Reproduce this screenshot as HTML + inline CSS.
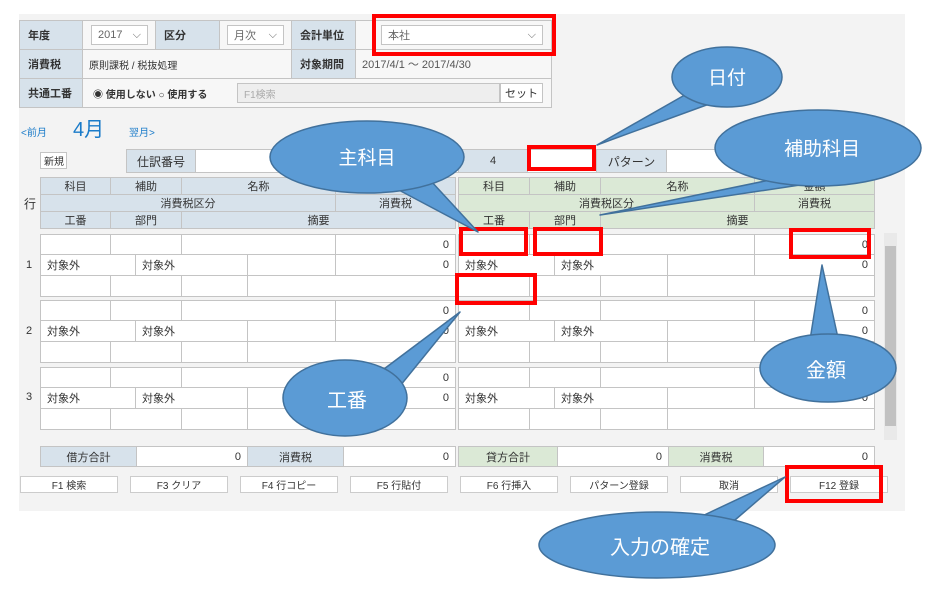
<!DOCTYPE html>
<html><head><meta charset="utf-8"><style>
body{margin:0;width:935px;height:591px;background:#fff;position:relative;overflow:hidden;font-family:"Liberation Sans","Noto Sans CJK JP",sans-serif;font-size:11px;color:#333}
.a{position:absolute;box-sizing:border-box}
.c{position:absolute;box-sizing:border-box;border:1px solid #c4c4c4;background:#fff;display:flex;align-items:center;padding:0 6px;white-space:nowrap;overflow:hidden}
.h{background:#d7e2eb;justify-content:center;padding:0}
.g{background:#dbe9d6;justify-content:center;padding:0}
.r{justify-content:flex-end}
.l{background:#d7e2eb;font-weight:bold;padding-left:8px}
.b{position:absolute;box-sizing:border-box;border:1px solid #ccc;background:#fff;font-size:10px;display:flex;align-items:center;justify-content:center;height:17px;top:476px;width:98px}
.red{position:absolute;box-sizing:border-box;border:4px solid #f00}
</style></head><body>
<div class="a" style="left:19px;top:14px;width:886px;height:497px;background:#f3f3f3"></div>
<!-- top table -->
<div class="c l" style="left:19px;top:20px;width:64px;height:30px">年度</div>
<div class="c" style="left:82px;top:20px;width:74px;height:30px;background:#f7f7f7"></div>
<div class="c" style="left:91px;top:25px;width:57px;height:20px;color:#666">2017 <span style="margin-left:auto">⌵</span></div>
<div class="c l" style="left:155px;top:20px;width:65px;height:30px">区分</div>
<div class="c" style="left:219px;top:20px;width:73px;height:30px;background:#f7f7f7"></div>
<div class="c" style="left:227px;top:25px;width:57px;height:20px;color:#666">月次 <span style="margin-left:auto">⌵</span></div>
<div class="c l" style="left:291px;top:20px;width:65px;height:30px">会計単位</div>
<div class="c" style="left:355px;top:20px;width:197px;height:30px;background:#f7f7f7"></div>
<div class="c" style="left:381px;top:25px;width:162px;height:20px;color:#666">本社 <span style="margin-left:auto">⌵</span></div>
<div class="c l" style="left:19px;top:49px;width:64px;height:30px">消費税</div>
<div class="c" style="left:82px;top:49px;width:210px;height:30px;background:#f7f7f7;font-size:10px">原則課税 / 税抜処理</div>
<div class="c l" style="left:291px;top:49px;width:65px;height:30px">対象期間</div>
<div class="c" style="left:355px;top:49px;width:197px;height:30px;background:#f7f7f7;color:#555">2017/4/1 ～ 2017/4/30</div>
<div class="c l" style="left:19px;top:78px;width:64px;height:30px">共通工番</div>
<div class="c" style="left:82px;top:78px;width:470px;height:30px;background:#f7f7f7;font-weight:bold;font-size:10px;padding-left:10px">◉ 使用しない ○ 使用する</div>
<div class="c" style="left:237px;top:83px;width:263px;height:20px;background:#eee;color:#aaa;font-size:10px">F1検索</div>
<div class="c" style="left:500px;top:83px;width:43px;height:20px;justify-content:center;padding:0">セット</div>
<!-- month nav -->
<div class="a" style="left:21px;top:124px;color:#1a7bc9;font-size:10px">&lt;前月</div>
<div class="a" style="left:73px;top:113px;color:#1a7bc9;font-size:20px">4月</div>
<div class="a" style="left:129px;top:124px;color:#1a7bc9;font-size:10px">翌月&gt;</div>
<div class="c" style="left:40px;top:152px;width:27px;height:17px;font-size:10px;padding:0 3px">新規</div>
<div class="c h" style="left:126px;top:149px;width:70px;height:24px;font-size:12px">仕訳番号</div>
<div class="c" style="left:195px;top:149px;width:264px;height:24px;justify-content:center">000000</div>
<div class="c h" style="left:458px;top:149px;width:70px;height:24px">4</div>
<div class="c" style="left:527px;top:149px;width:70px;height:24px"></div>
<div class="c h" style="left:596px;top:149px;width:71px;height:24px;font-size:12px">パターン</div>
<div class="c" style="left:666px;top:149px;width:208px;height:24px"></div>
<div class="a" style="left:24px;top:195px;font-size:12px">行</div>
<!-- left header -->
<div class="c h" style="left:40px;top:177px;width:71px;height:18px">科目</div>
<div class="c h" style="left:110px;top:177px;width:72px;height:18px">補助</div>
<div class="c h" style="left:181px;top:177px;width:155px;height:18px">名称</div>
<div class="c h" style="left:335px;top:177px;width:121px;height:18px">金額</div>
<div class="c h" style="left:40px;top:194px;width:296px;height:18px">消費税区分</div>
<div class="c h" style="left:335px;top:194px;width:121px;height:18px">消費税</div>
<div class="c h" style="left:40px;top:211px;width:71px;height:18px">工番</div>
<div class="c h" style="left:110px;top:211px;width:72px;height:18px">部門</div>
<div class="c h" style="left:181px;top:211px;width:275px;height:18px">摘要</div>
<!-- right header -->
<div class="c g" style="left:458px;top:177px;width:72px;height:18px">科目</div>
<div class="c g" style="left:529px;top:177px;width:72px;height:18px">補助</div>
<div class="c g" style="left:600px;top:177px;width:155px;height:18px">名称</div>
<div class="c g" style="left:754px;top:177px;width:121px;height:18px">金額</div>
<div class="c g" style="left:458px;top:194px;width:297px;height:18px">消費税区分</div>
<div class="c g" style="left:754px;top:194px;width:121px;height:18px">消費税</div>
<div class="c g" style="left:458px;top:211px;width:72px;height:18px">工番</div>
<div class="c g" style="left:529px;top:211px;width:72px;height:18px">部門</div>
<div class="c g" style="left:600px;top:211px;width:275px;height:18px">摘要</div>

<!-- blocks -->
<div class="a" style="left:26px;top:259px;font-size:11px">1</div>
<div class="a" style="left:26px;top:325px;font-size:11px">2</div>
<div class="a" style="left:26px;top:391px;font-size:11px">3</div>

<!-- block1 -->
<div class="c" style="left:40px;top:234px;width:71px;height:21px"></div><div class="c" style="left:110px;top:234px;width:72px;height:21px"></div><div class="c" style="left:181px;top:234px;width:155px;height:21px"></div><div class="c r" style="left:335px;top:234px;width:121px;height:21px">0</div>
<div class="c" style="left:40px;top:254px;width:96px;height:22px">対象外</div><div class="c" style="left:135px;top:254px;width:113px;height:22px">対象外</div><div class="c" style="left:247px;top:254px;width:89px;height:22px"></div><div class="c r" style="left:335px;top:254px;width:121px;height:22px">0</div>
<div class="c" style="left:40px;top:275px;width:71px;height:22px"></div><div class="c" style="left:110px;top:275px;width:72px;height:22px"></div><div class="c" style="left:181px;top:275px;width:67px;height:22px"></div><div class="c" style="left:247px;top:275px;width:209px;height:22px"></div>
<div class="c" style="left:458px;top:234px;width:72px;height:21px"></div><div class="c" style="left:529px;top:234px;width:72px;height:21px"></div><div class="c" style="left:600px;top:234px;width:155px;height:21px"></div><div class="c r" style="left:754px;top:234px;width:121px;height:21px">0</div>
<div class="c" style="left:458px;top:254px;width:97px;height:22px">対象外</div><div class="c" style="left:554px;top:254px;width:114px;height:22px">対象外</div><div class="c" style="left:667px;top:254px;width:88px;height:22px"></div><div class="c r" style="left:754px;top:254px;width:121px;height:22px">0</div>
<div class="c" style="left:458px;top:275px;width:72px;height:22px"></div><div class="c" style="left:529px;top:275px;width:72px;height:22px"></div><div class="c" style="left:600px;top:275px;width:68px;height:22px"></div><div class="c" style="left:667px;top:275px;width:208px;height:22px"></div>
<!-- block2 -->
<div class="c" style="left:40px;top:300px;width:71px;height:21px"></div><div class="c" style="left:110px;top:300px;width:72px;height:21px"></div><div class="c" style="left:181px;top:300px;width:155px;height:21px"></div><div class="c r" style="left:335px;top:300px;width:121px;height:21px">0</div>
<div class="c" style="left:40px;top:320px;width:96px;height:22px">対象外</div><div class="c" style="left:135px;top:320px;width:113px;height:22px">対象外</div><div class="c" style="left:247px;top:320px;width:89px;height:22px"></div><div class="c r" style="left:335px;top:320px;width:121px;height:22px">0</div>
<div class="c" style="left:40px;top:341px;width:71px;height:22px"></div><div class="c" style="left:110px;top:341px;width:72px;height:22px"></div><div class="c" style="left:181px;top:341px;width:67px;height:22px"></div><div class="c" style="left:247px;top:341px;width:209px;height:22px"></div>
<div class="c" style="left:458px;top:300px;width:72px;height:21px"></div><div class="c" style="left:529px;top:300px;width:72px;height:21px"></div><div class="c" style="left:600px;top:300px;width:155px;height:21px"></div><div class="c r" style="left:754px;top:300px;width:121px;height:21px">0</div>
<div class="c" style="left:458px;top:320px;width:97px;height:22px">対象外</div><div class="c" style="left:554px;top:320px;width:114px;height:22px">対象外</div><div class="c" style="left:667px;top:320px;width:88px;height:22px"></div><div class="c r" style="left:754px;top:320px;width:121px;height:22px">0</div>
<div class="c" style="left:458px;top:341px;width:72px;height:22px"></div><div class="c" style="left:529px;top:341px;width:72px;height:22px"></div><div class="c" style="left:600px;top:341px;width:68px;height:22px"></div><div class="c" style="left:667px;top:341px;width:208px;height:22px"></div>
<!-- block3 -->
<div class="c" style="left:40px;top:367px;width:71px;height:21px"></div><div class="c" style="left:110px;top:367px;width:72px;height:21px"></div><div class="c" style="left:181px;top:367px;width:155px;height:21px"></div><div class="c r" style="left:335px;top:367px;width:121px;height:21px">0</div>
<div class="c" style="left:40px;top:387px;width:96px;height:22px">対象外</div><div class="c" style="left:135px;top:387px;width:113px;height:22px">対象外</div><div class="c" style="left:247px;top:387px;width:89px;height:22px"></div><div class="c r" style="left:335px;top:387px;width:121px;height:22px">0</div>
<div class="c" style="left:40px;top:408px;width:71px;height:22px"></div><div class="c" style="left:110px;top:408px;width:72px;height:22px"></div><div class="c" style="left:181px;top:408px;width:67px;height:22px"></div><div class="c" style="left:247px;top:408px;width:209px;height:22px"></div>
<div class="c" style="left:458px;top:367px;width:72px;height:21px"></div><div class="c" style="left:529px;top:367px;width:72px;height:21px"></div><div class="c" style="left:600px;top:367px;width:155px;height:21px"></div><div class="c r" style="left:754px;top:367px;width:121px;height:21px">0</div>
<div class="c" style="left:458px;top:387px;width:97px;height:22px">対象外</div><div class="c" style="left:554px;top:387px;width:114px;height:22px">対象外</div><div class="c" style="left:667px;top:387px;width:88px;height:22px"></div><div class="c r" style="left:754px;top:387px;width:121px;height:22px">0</div>
<div class="c" style="left:458px;top:408px;width:72px;height:22px"></div><div class="c" style="left:529px;top:408px;width:72px;height:22px"></div><div class="c" style="left:600px;top:408px;width:68px;height:22px"></div><div class="c" style="left:667px;top:408px;width:208px;height:22px"></div>
<!-- scrollbar -->
<div class="a" style="left:884px;top:233px;width:13px;height:207px;background:#e9e9e9"></div>
<div class="a" style="left:885px;top:246px;width:11px;height:180px;background:#c1c1c1"></div>
<!-- totals -->
<div class="c h" style="left:40px;top:446px;width:97px;height:21px">借方合計</div>
<div class="c r" style="left:136px;top:446px;width:112px;height:21px">0</div>
<div class="c h" style="left:247px;top:446px;width:97px;height:21px">消費税</div>
<div class="c r" style="left:343px;top:446px;width:113px;height:21px">0</div>
<div class="c g" style="left:458px;top:446px;width:100px;height:21px">貸方合計</div>
<div class="c r" style="left:557px;top:446px;width:112px;height:21px">0</div>
<div class="c g" style="left:668px;top:446px;width:96px;height:21px">消費税</div>
<div class="c r" style="left:763px;top:446px;width:112px;height:21px">0</div>
<!-- buttons -->
<div class="b" style="left:20px">F1 検索</div>
<div class="b" style="left:130px">F3 クリア</div>
<div class="b" style="left:240px">F4 行コピー</div>
<div class="b" style="left:350px">F5 行貼付</div>
<div class="b" style="left:460px">F6 行挿入</div>
<div class="b" style="left:570px">パターン登録</div>
<div class="b" style="left:680px">取消</div>
<div class="b" style="left:790px">F12 登録</div>
<!-- red boxes -->
<div class="red" style="left:372px;top:14px;width:184px;height:42px"></div>
<div class="red" style="left:527px;top:145px;width:69px;height:26px"></div>
<div class="red" style="left:459px;top:227px;width:69px;height:29px"></div>
<div class="red" style="left:533px;top:227px;width:70px;height:29px"></div>
<div class="red" style="left:455px;top:273px;width:82px;height:32px"></div>
<div class="red" style="left:789px;top:228px;width:82px;height:31px"></div>
<div class="red" style="left:785px;top:465px;width:98px;height:38px"></div>
<!-- callouts -->
<svg class="a" style="left:0;top:0" width="935" height="591" viewBox="0 0 935 591">
<g fill="#5b9bd5" stroke="#41719c" stroke-width="1.5" stroke-linejoin="round">
<path d="M395,188 L478,232 L430,180 Z"/><ellipse cx="367" cy="157" rx="97" ry="36"/>
<path d="M690,92 L597,145 L712,103 Z"/><ellipse cx="727" cy="77" rx="55" ry="30"/>
<path d="M770,180 L600,215 L800,185 Z"/><ellipse cx="818" cy="148" rx="103" ry="38"/>
<path d="M810,340 L822,265 L838,338 Z"/><ellipse cx="828" cy="368" rx="68" ry="34"/>
<path d="M380,372 L460,312 L400,386 Z"/><ellipse cx="345" cy="398" rx="62" ry="38"/>
<path d="M700,517 L785,477 L735,520 Z"/><ellipse cx="657" cy="545" rx="118" ry="33"/>
</g>
<g fill="#fff" font-family="Liberation Sans,Noto Sans CJK JP,sans-serif" text-anchor="middle">
<text x="367" y="164" font-size="19">主科目</text>
<text x="727" y="84" font-size="19">日付</text>
<text x="822" y="155" font-size="19">補助科目</text>
<text x="826" y="377" font-size="20">金額</text>
<text x="347" y="407" font-size="20">工番</text>
<text x="660" y="554" font-size="20">入力の確定</text>
</g>
</svg>
</body></html>
